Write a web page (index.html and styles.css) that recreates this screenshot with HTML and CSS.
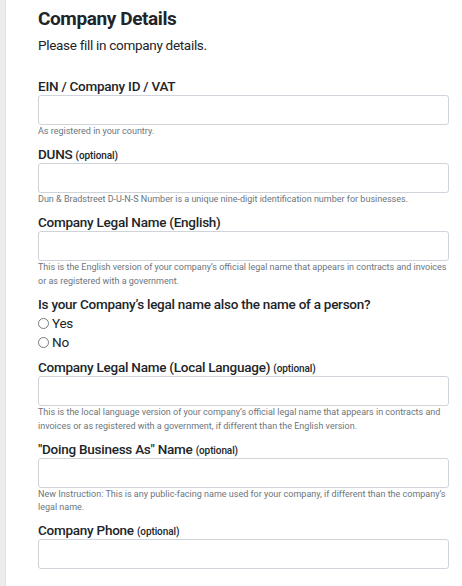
FILE: index.html
```html
<!DOCTYPE html>
<html>
<head>
<meta charset="utf-8">
<link rel="stylesheet" href="styles.css">
</head>
<body>
<div class="page">
  <div class="strip"></div>
  <main class="content">
    <h1 class="title">Company Details</h1>
    <p class="subtitle">Please fill in company details.</p>

    <div class="group first">
      <label class="label">EIN / Company ID / VAT</label>
      <div class="input"></div>
      <div class="help">As registered in your country.</div>
    </div>

    <div class="group">
      <label class="label">DUNS <span class="opt">(optional)</span></label>
      <div class="input"></div>
      <div class="help">Dun &amp; Bradstreet D-U-N-S Number is a unique nine-digit identification number for businesses.</div>
    </div>

    <div class="group">
      <label class="label">Company Legal Name (English)</label>
      <div class="input"></div>
      <div class="help">This is the English version of your company’s official legal name that appears in contracts and invoices or as registered with a government.</div>
    </div>

    <div class="group radios">
      <label class="label">Is your Company’s legal name also the name of a person?</label>
      <div class="radio"><span class="circle"></span><span>Yes</span></div>
      <div class="radio"><span class="circle"></span><span>No</span></div>
    </div>

    <div class="group">
      <label class="label">Company Legal Name (Local Language) <span class="opt">(optional)</span></label>
      <div class="input"></div>
      <div class="help">This is the local language version of your company’s official legal name that appears in contracts and invoices or as registered with a government, if different than the English version.</div>
    </div>

    <div class="group">
      <label class="label">"Doing Business As" Name <span class="opt">(optional)</span></label>
      <div class="input"></div>
      <div class="help">New Instruction: This is any public-facing name used for your company, if different than the company’s legal name.</div>
    </div>

    <div class="group">
      <label class="label">Company Phone <span class="opt">(optional)</span></label>
      <div class="input"></div>
    </div>
  </main>
</div>
</body>
</html>
```

FILE: styles.css
```css
html, body {
  margin: 0;
  padding: 0;
  background: #fff;
}
body {
  font-family: Roboto, "Open Sans", sans-serif;
  color: #212529;
}
.page {
  display: flex;
  min-height: 586px;
}
.strip {
  width: 6px;
  flex: none;
  background: #ececec;
  border-right: 1px solid #e2e2e2;
  box-sizing: border-box;
}
.content {
  flex: 1;
  padding: 7px 13px 0 32px;
}
.title {
  margin: 0;
  font-size: 19px;
  line-height: 24px;
  font-weight: 700;
  letter-spacing: -0.4px;
}
.subtitle {
  margin: 4px 0 0;
  font-size: 13.5px;
  line-height: 20px;
  letter-spacing: -0.3px;
}
.group {
  margin-top: 6.5px;
}
.group.first {
  margin-top: 22px;
}
.group.radios {
  margin-bottom: 2px;
}
.radios .label {
  margin-bottom: 1px;
}
.label {
  display: block;
  height: 18px;
  font-size: 13.5px;
  line-height: 18px;
  font-weight: 500;
  letter-spacing: -0.25px;
}
.opt {
  font-size: 10px;
  line-height: 1;
  font-weight: 500;
  letter-spacing: -0.1px;
}
.input {
  height: 30px;
  box-sizing: border-box;
  border: 1px solid #ced4da;
  border-radius: 3px;
  background: #fff;
}
.help {
  font-size: 9px;
  line-height: 13.5px;
  color: #6c757d;
}
.radio {
  display: flex;
  align-items: center;
  gap: 3px;
  font-size: 13.5px;
  line-height: 19px;
  letter-spacing: -0.25px;
}
.circle {
  width: 9px;
  height: 9px;
  border: 1px solid #7a7a7a;
  border-radius: 50%;
}
```
